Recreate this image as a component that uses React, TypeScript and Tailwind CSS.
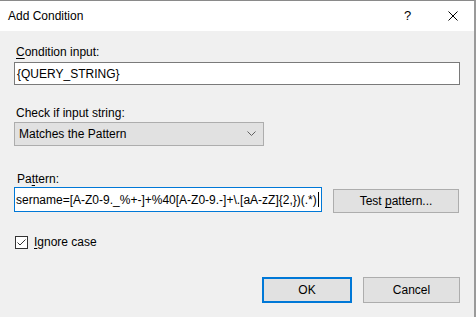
export default function App() {
  return (
    <div className="w-[476px] h-[317px] bg-[#f0f0f0] border-t border-t-[#8a8a8a] border-r-2 border-r-[#9a9a9a] flex flex-col font-['Liberation_Sans',Arial,sans-serif] text-[12px] leading-[16px] text-black overflow-hidden">
      {/* Title bar */}
      <div className="h-[30px] bg-white flex items-center pl-2 shrink-0">
        <span className="flex-1">Add Condition</span>
        <span className="w-[10px] mr-[34px] text-[13px]">?</span>
        <svg width="10" height="10" viewBox="0 0 10 10" className="mr-[16px]">
          <path d="M0.5 0.5 L9.5 9.5 M9.5 0.5 L0.5 9.5" stroke="#000" strokeWidth="1" />
        </svg>
      </div>

      {/* Body */}
      <div className="flex flex-col pl-[14px] pr-[14px] pt-[13px] flex-1">
        <div className="pl-[2px]">
          <span className="underline underline-offset-2">C</span>ondition input:
        </div>
        <div className="mt-[2px] h-[23px] bg-white border border-[#7a7a7a] flex items-center px-[2px]">
          {"{QUERY_STRING}"}
        </div>

        <div className="mt-[20px] pl-[2px]">Check if input string:</div>
        <div className="mt-[1px] w-[250px] h-[24px] bg-[#e1e1e1] border border-[#adadad] flex items-center pl-[4px] pr-[7px]">
          <span className="flex-1">Matches the Pattern</span>
          <svg width="9" height="6" viewBox="0 0 9 6">
            <path d="M0.5 0.5 L4.5 4.5 L8.5 0.5" stroke="#606060" fill="none" strokeWidth="1" />
          </svg>
        </div>

        <div className="mt-[25px] pl-[3px]">
          Pa<span className="underline underline-offset-2">t</span>tern:
        </div>
        <div className="flex items-start">
          <div className="w-[308px] h-[25px] bg-white border border-[#0078d7] flex items-center overflow-hidden pl-px">
            <span className="whitespace-nowrap shrink-0">sername=[A-Z0-9._%+-]+%40[A-Z0-9.-]+\.[aA-zZ]{"{2,}"})(.*)</span>
            <span className="w-px h-[15px] bg-black shrink-0 ml-px" />
          </div>
          <div className="ml-[11px] mt-[2px] w-[126px] h-[24px] bg-[#e1e1e1] border border-[#adadad] flex items-center justify-center">
            <span>
              Test <span className="underline underline-offset-2">p</span>attern...
            </span>
          </div>
        </div>

        <div className="mt-[21px] flex items-center">
          <div className="w-[13px] h-[13px] bg-white border border-[#333] flex items-center justify-center ml-px">
            <svg width="11" height="11" viewBox="0 0 11 11">
              <path d="M1.5 5.5 L4 8 L9.5 2.5" stroke="#333" fill="none" strokeWidth="1" />
            </svg>
          </div>
          <span className="ml-[6px]">
            <span className="underline underline-offset-2">I</span>gnore case
          </span>
        </div>

        <div className="mt-auto mb-[14px] flex justify-end">
          <div className="w-[90px] h-[26px] bg-[#e1e1e1] border-2 border-[#0078d7] flex items-center justify-center">
            OK
          </div>
          <div className="ml-[11px] w-[97px] h-[26px] bg-[#e1e1e1] border border-[#adadad] flex items-center justify-center">
            Cancel
          </div>
        </div>
      </div>
    </div>
  );
}
